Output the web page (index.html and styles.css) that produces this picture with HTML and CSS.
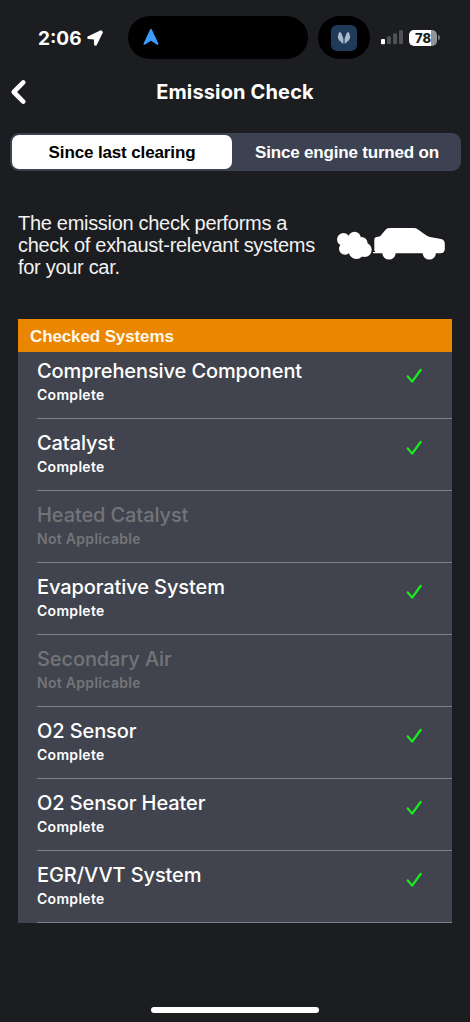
FILE: index.html
```html
<!DOCTYPE html>
<html lang="en">
<head>
    <meta charset="UTF-8">
    <meta name="viewport" content="width=device-width, initial-scale=1.0">
    <title>Emission Check</title>
    <link rel="stylesheet" href="styles.css">
</head>
<body>
    <svg class="defs" width="0" height="0">
        <symbol id="check" viewBox="0 0 16 16">
            <path d="M1.8 8.4 L6.1 13.6 L14.6 2" fill="none" stroke="#14f01e" stroke-width="2.2" stroke-linecap="round" stroke-linejoin="round"/>
        </symbol>
    </svg>

    <div class="status-bar">
        <div class="clock">
            <span class="time">2:06</span>
            <svg class="location" width="16" height="16" viewBox="0 0 16 16">
                <path d="M1 7.2 L14 1 L15.2 2.2 L9 15 L7.8 14.8 L7.6 8.8 L1.2 8.4 Z" fill="#fff" stroke="#fff" stroke-width="1.4" stroke-linejoin="round"/>
            </svg>
        </div>
        <div class="island">
            <svg width="16" height="18" viewBox="0 0 16 18">
                <path d="M7.2 1.2 Q8 .2 8.7 1.2 L15.4 15.4 Q15.7 17.2 14.2 16.8 L8 12.8 L1.8 16.8 Q.2 17.2 .6 15.4 Z" fill="#3b9bff"/>
            </svg>
        </div>
        <div class="island island-small">
            <div class="app-icon">
                <svg width="14" height="14" viewBox="0 0 14 14" fill="#a9bacb">
                    <path d="M2.8 .8 Q4.8 1.8 5.4 5 L6.4 7.5 L6.4 12.8 Q4.2 12.2 3.5 10.3 Q1.4 9.5 1.4 7.8 Q.3 6.5 1.1 4.8 Q.9 2.6 2.8 .8 Z"/>
                    <path d="M11.2 .8 Q9.2 1.8 8.6 5 L7.6 7.5 L7.6 12.8 Q9.8 12.2 10.5 10.3 Q12.6 9.5 12.6 7.8 Q13.7 6.5 12.9 4.8 Q13.1 2.6 11.2 .8 Z"/>
                </svg>
            </div>
        </div>
        <svg class="signal" width="22" height="15" viewBox="0 0 22 15">
            <rect x="0" y="9" width="4" height="5.3" rx="1" fill="#fff"/>
            <rect x="6" y="6.3" width="4" height="8" rx="1" fill="#505155"/>
            <rect x="12" y="3.3" width="4" height="11" rx="1" fill="#505155"/>
            <rect x="18" y=".3" width="4" height="14" rx="1" fill="#505155"/>
        </svg>
        <div class="battery">78</div>
        <div class="battery-tip"></div>
    </div>

    <div class="nav-bar">
        <svg class="back" width="18" height="26" viewBox="0 0 18 26">
            <path d="M13.3 3.4 L3.7 13 L13.3 22.6" fill="none" stroke="#fff" stroke-width="4.6" stroke-linecap="round" stroke-linejoin="round"/>
        </svg>
        <h1>Emission Check</h1>
    </div>

    <div class="tabs">
        <button class="tab active">Since last clearing</button>
        <button class="tab">Since engine turned on</button>
    </div>

    <div class="intro">
        <p>The emission check performs a<br>check of exhaust-relevant systems<br>for your car.</p>
        <svg class="car" width="110" height="34" viewBox="0 0 110 34" fill="#fff">
            <circle cx="7.5" cy="13.5" r="6.5"/>
            <circle cx="18.5" cy="12" r="6.2"/>
            <circle cx="9" cy="22.8" r="6"/>
            <circle cx="25.5" cy="17" r="6"/>
            <circle cx="20.5" cy="25.3" r="7.7"/>
            <circle cx="28.5" cy="23.8" r="7.2"/>
            <circle cx="17" cy="19" r="9"/>
            <path d="M38.3 24.6 V14 Q38.3 10.7 42 10.7 Q43.5 10.7 45 9.2 L50 3.3 Q51.5 2 54 2 H77.5 Q80 2 82 3.4 L89 8.6 Q91 10.4 94 11 L105 13 Q108.8 13.8 108.8 18 V23 Q108.8 27 104.5 27.3 H37 V26 H39.5 Z"/>
            <circle cx="53" cy="27" r="6.6"/>
            <circle cx="93.3" cy="27" r="6.6"/>
        </svg>
    </div>

    <div class="systems">
        <h2>Checked Systems</h2>
        <div class="row first">
            <div><h3>Comprehensive Component</h3><p>Complete</p></div>
            <svg class="check"><use href="#check"/></svg>
        </div>
        <div class="row">
            <div><h3>Catalyst</h3><p>Complete</p></div>
            <svg class="check"><use href="#check"/></svg>
        </div>
        <div class="row disabled">
            <div><h3>Heated Catalyst</h3><p>Not Applicable</p></div>
        </div>
        <div class="row">
            <div><h3>Evaporative System</h3><p>Complete</p></div>
            <svg class="check"><use href="#check"/></svg>
        </div>
        <div class="row disabled">
            <div><h3>Secondary Air</h3><p>Not Applicable</p></div>
        </div>
        <div class="row">
            <div><h3>O2 Sensor</h3><p>Complete</p></div>
            <svg class="check"><use href="#check"/></svg>
        </div>
        <div class="row">
            <div><h3>O2 Sensor Heater</h3><p>Complete</p></div>
            <svg class="check"><use href="#check"/></svg>
        </div>
        <div class="row">
            <div><h3>EGR/VVT System</h3><p>Complete</p></div>
            <svg class="check"><use href="#check"/></svg>
        </div>
    </div>

    <div class="home-indicator"></div>
</body>
</html>
```
FILE: styles.css
```css
* {
    box-sizing: border-box;
}
body {
    margin: 0;
    height: 1022px;
    overflow: hidden;
    display: flex;
    flex-direction: column;
    background-color: #1c1d20;
    color: white;
    font-family: Inter, sans-serif;
}
h1, h2, h3, p {
    margin: 0;
}
svg {
    display: block;
    flex: none;
}
.defs {
    position: absolute;
}
.status-bar {
    display: flex;
    align-items: center;
    height: 75px;
}
.clock {
    display: flex;
    align-items: center;
    gap: 5px;
    width: 128px;
    padding: 1px 0 0 38px;
}
.time {
    width: 44px;
    font-size: 19px;
    font-weight: 700;
    white-space: nowrap;
}
.island {
    display: flex;
    align-items: center;
    width: 180px;
    height: 43px;
    padding: 0 0 2px 15px;
    border-radius: 22px;
    background-color: black;
}
.island-small {
    justify-content: center;
    width: 52px;
    margin-left: 10px;
    padding: 0;
}
.app-icon {
    display: flex;
    align-items: center;
    justify-content: center;
    width: 26px;
    height: 26px;
    border-radius: 6px;
    background-color: #203a5a;
}
.signal {
    margin-left: 11px;
}
.battery {
    width: 28px;
    height: 16px;
    margin-left: 6px;
    border-radius: 5px;
    background: linear-gradient(to right, white 78%, #929397 78%);
    color: #1c1d20;
    font-size: 13px;
    font-weight: 800;
    line-height: 16px;
    text-align: center;
}
.battery-tip {
    width: 2px;
    height: 5px;
    margin-left: 1px;
    border-radius: 0 2px 2px 0;
    background-color: #77787c;
}
.nav-bar {
    display: grid;
    grid-template-columns: 60px 1fr 60px;
    align-items: center;
    height: 34px;
}
.back {
    margin-left: 10px;
}
.nav-bar h1 {
    font-size: 20px;
    font-weight: 700;
    letter-spacing: 0.15px;
    line-height: 24px;
    text-align: center;
}
.tabs {
    display: flex;
    height: 38px;
    margin: 24px 9px 0 10px;
    padding: 2px;
    border-radius: 9px;
    background-color: #3c4251;
}
.tab {
    flex: 1;
    padding: 2px 0 0 3px;
    border: none;
    border-radius: 7px;
    background: none;
    color: white;
    font-family: "Liberation Sans", Arial, sans-serif;
    font-size: 17px;
    font-weight: bold;
    letter-spacing: -0.18px;
    white-space: nowrap;
}
.tab.active {
    flex: 0 0 220px;
    padding-left: 0;
    background-color: white;
    color: black;
    letter-spacing: -0.13px;
}
.intro {
    display: flex;
    justify-content: space-between;
    height: 148px;
    padding: 41px 24px 0 18px;
}
.intro p {
    color: #f2f2f2;
    font-family: "Liberation Sans", Arial, sans-serif;
    font-size: 20px;
    letter-spacing: -0.3px;
    line-height: 22px;
    white-space: nowrap;
}
.car {
    margin-top: 14px;
}
.systems {
    width: 434px;
    margin-left: 18px;
    background-color: #41444e;
}
.systems h2 {
    height: 33px;
    padding-left: 12px;
    background-color: #eb8600;
    color: #fff8e8;
    font-family: "Liberation Sans", Arial, sans-serif;
    font-size: 17px;
    letter-spacing: -0.12px;
    line-height: 35px;
}
.row {
    display: flex;
    justify-content: space-between;
    height: 72px;
    margin-left: 19px;
    padding: 12px 30px 0 0;
    border-bottom: 1px solid #7d8087;
}
.row.first {
    height: 67px;
    padding-top: 7px;
}
.row h3 {
    font-size: 20px;
    font-weight: 500;
    letter-spacing: -0.1px;
    line-height: 24px;
}
.row p {
    margin-top: 3px;
    font-size: 14px;
    font-weight: 600;
    letter-spacing: 0.3px;
    line-height: 17px;
}
.row.disabled {
    color: #737478;
}
.check {
    width: 16px;
    height: 16px;
    margin-top: 9px;
}
.home-indicator {
    width: 168px;
    height: 6px;
    margin: auto auto 9px;
    border-radius: 3px;
    background-color: white;
}
```
